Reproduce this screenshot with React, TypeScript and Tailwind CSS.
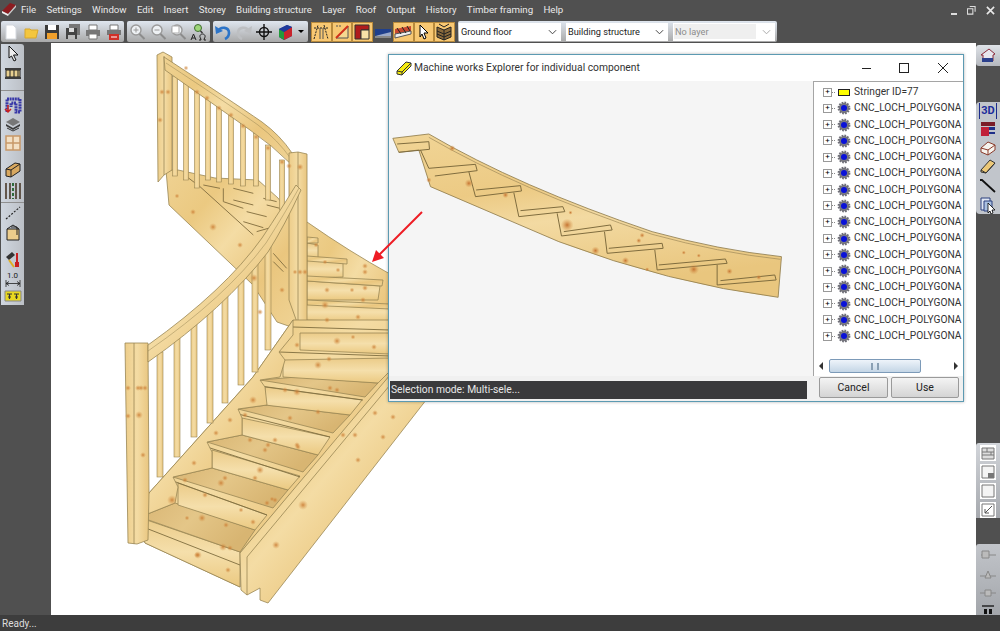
import type { ReactNode } from "react";

const font = "font-['Roboto','Liberation_Sans',Arial,sans-serif]";
const menus = ["File", "Settings", "Window", "Edit", "Insert", "Storey", "Building structure", "Layer", "Roof", "Output", "History", "Timber framing", "Help"];

const LINE = "#998654";

function Ico({ children, className = "" }: { children: ReactNode; className?: string }) {
  return (
    <svg viewBox="0 0 18 18" className={`h-[18px] w-[18px] shrink-0 ${className}`}>
      {children}
    </svg>
  );
}

function Btn({ children, on }: { children: ReactNode; on?: boolean }) {
  return (
    <div className={`flex h-5 w-[20.5px] shrink-0 items-center justify-center ${on ? "border border-[#b88a3c] bg-[#f8c873]" : ""}`}>
      {children}
    </div>
  );
}

function Loupe({ mark, dim = true }: { mark?: ReactNode; dim?: boolean }) {
  return (
    <Ico>
      <circle cx="8" cy="7" r="5" fill="#eef1f4" stroke={dim ? "#9a9a9a" : "#4a4a4a"} strokeWidth="1.4" />
      <path d="M11.5 11l5 5" stroke={dim ? "#8c8c8c" : "#3a3a3a"} strokeWidth="2" />
      {mark}
    </Ico>
  );
}

function TopToolbar() {
  return (
    <div className="flex h-[21px] items-center gap-[3px] pl-px">
      <Group className="w-[123px]">
        <Btn><Ico><path d="M4 2h7l3 3v11H4z" fill="#fff" stroke="#d4d8de" /></Ico></Btn>
        <Btn><Ico><path d="M2 6h5l1 1h7l-2 8H2z" fill="#f4c63e" stroke="#d8a72c" /></Ico></Btn>
        <Btn><Ico><path d="M2 2h14v14H2z" fill="#3b3b3b" /><path d="M5 2h8v5H5z" fill="#fff" /><path d="M4 10h10v6H4z" fill="#f0a02c" /></Ico></Btn>
        <Btn><Ico><path d="M5 1h11v11H5z" fill="#777" /><path d="M2 5h11v11H2z" fill="#444" /><path d="M5 5h5v4H5z" fill="#ddd" /><path d="M4 12h7v4H4z" fill="#bbb" /></Ico></Btn>
        <Btn><Ico><path d="M5 2h8v5H5z" fill="#fff" stroke="#777" /><path d="M2 7h14v6H2z" fill="#777" /><path d="M5 11h8v5H5z" fill="#fff" stroke="#777" /></Ico></Btn>
        <Btn><Ico><path d="M5 2h8v5H5z" fill="#fff" stroke="#777" /><path d="M2 7h14v5H2z" fill="#777" /><path d="M4 11h10v6H4z" fill="#d03028" /><path d="M6 14h6" stroke="#fff" /></Ico></Btn>
      </Group>
      <Group className="w-[83px]">
        <Btn><Loupe mark={<path d="M5.5 7h5M8 4.5v5" stroke="#999" />} /></Btn>
        <Btn><Loupe mark={<path d="M5.5 7h5" stroke="#999" />} /></Btn>
        <Btn><Loupe mark={<path d="M3 3h7v7H3z" fill="#fff" stroke="#aaa" />} /></Btn>
        <Btn>
          <Ico>
            <circle cx="8" cy="5" r="3.5" fill="#9ed67a" stroke="#3f6e2f" />
            <path d="M10.5 8l2 2" stroke="#333" strokeWidth="1.5" />
            <path d="M1 17l2.5-6 2.5 6M2 15h3M9 17h2l-.5-2c-1.5-2 0-4 2-4s3.5 2 2 4l-.5 2h2" fill="none" stroke="#222" />
          </Ico>
        </Btn>
      </Group>
      <Group className="w-[95px]">
        <Btn><Ico><path d="M4 8c3-5 11-4 11 2 0 3-2 5-4 6" fill="none" stroke="#2c74c8" strokeWidth="2.6" /><path d="M1 3l1 8 7-3z" fill="#2c74c8" /></Ico></Btn>
        <Btn><Ico><path d="M14 8c-3-5-11-4-11 2 0 3 2 5 4 6" fill="none" stroke="#bdbfc2" strokeWidth="2.6" /><path d="M17 3l-1 8-7-3z" fill="#bdbfc2" /></Ico></Btn>
        <Btn><Ico><circle cx="9" cy="9" r="4.5" fill="none" stroke="#111" strokeWidth="1.4" /><path d="M9 1v16M1 9h16" stroke="#111" strokeWidth="1.4" /></Ico></Btn>
        <Btn><Ico><path d="M3 6l8-4 5 2v9l-8 4-5-3z" fill="#1f3a9c" /><path d="M3 6l5 3v8l-5-3z" fill="#239a3c" /><path d="M8 9l8-5v9l-8 4z" fill="#c8242c" /><path d="M3 6l8-4 5 2-8 5z" fill="#1f3a9c" /></Ico></Btn>
        <div className="ml-[3px] h-0 w-0 border-x-[3px] border-t-[3px] border-x-transparent border-t-black" />
      </Group>
      <div className="flex h-5 w-[144px] items-center">
        <Btn on><Ico><path d="M2 16L6 2M12 2l4 14M2 5h14" stroke="#222" strokeDasharray="2 1" fill="none" /><path d="M8 5v11M11 5v11" stroke="#555" /></Ico></Btn>
        <Btn on><Ico><path d="M3 15L15 3v12z" fill="#f7d890" stroke="#555" /><path d="M3 15L15 3" stroke="#d0301c" strokeWidth="2" /><path d="M3 3h6" stroke="#555" strokeDasharray="2 1" /></Ico></Btn>
        <Btn on><Ico><path d="M2 2h14v5H8v9H2z" fill="#b01c1c" stroke="#333" /><path d="M8 7h8v9H8z" fill="#f7e0a8" stroke="#333" /></Ico></Btn>
        <Btn><Ico><path d="M1 13L17 6v7z" fill="#9aa8c8" /><path d="M1 6h16v3L1 13z" fill="#1f3f8c" /><path d="M1 13h16v2H1z" fill="#888" /></Ico></Btn>
        <Btn on><Ico><path d="M1 6l16-3v5L1 11z" fill="#c84830" /><path d="M1 11l16-3v3L1 15z" fill="#eee" stroke="#555" /><path d="M3 5l4 6M8 4l4 6M13 3l3 5" stroke="#222" /></Ico></Btn>
        <Btn on><Ico><path d="M5 2l8 8H9l2 5-2 1-2-5-2 3z" fill="#fff" stroke="#000" /></Ico></Btn>
        <Btn on><Ico><path d="M2 4l7 3 7-3v10l-7 3-7-3z" fill="#8a6a3c" stroke="#222" /><path d="M9 7v10M2 8l7 3 7-3M2 11l7 3 7-3M4 1l5 3 5-3" stroke="#222" fill="none" /></Ico></Btn>
      </div>
      <Group className="w-[319px] pl-px">
        <Combo label="Ground floor" />
        <Combo label="Building structure" className="ml-[5px]" />
        <Combo label="No layer" className="ml-[5px]" off />
      </Group>
    </div>
  );
}

function Group({ children, className = "" }: { children: ReactNode; className?: string }) {
  return (
    <div className={`flex h-[21px] items-center rounded-[2px] bg-gradient-to-b from-[#dfe6ef] to-[#a9a9a9] ${className}`}>
      {children}
    </div>
  );
}

function Combo({ label, className = "", off }: { label: string; className?: string; off?: boolean }) {
  return (
    <div className={`flex h-[18px] w-[102px] items-center bg-white pl-px pr-1 text-[9.2px] ${off ? "text-[#8c8c8c]" : "text-[#222]"} ${className}`}>
      <span className={`flex h-[15px] flex-1 items-center whitespace-nowrap pl-px ${off ? "bg-[#efefef]" : ""}`}>{label}</span>
      <svg viewBox="0 0 10 6" className="ml-1.5 h-[6px] w-[9px] shrink-0">
        <path d="M1 1l4 4 4-4" fill="none" stroke={off ? "#aaa" : "#444"} strokeWidth="1.1" />
      </svg>
    </div>
  );
}

function LeftToolbar() {
  return (
    <div className="ml-px mt-px flex h-[261px] w-[23px] flex-col items-center rounded-tr-[3px] bg-gradient-to-r from-[#cfd6df] to-[#bcc0c6] pt-[1px]">
      <Ico><path d="M5 1l9 9H9.5l2.5 5-2 1-2.5-5L5 13z" fill="#eee" stroke="#111" /></Ico>
      <Ico className="mt-px"><path d="M2 6h14v7H2z" fill="#e8d090" stroke="#222" /><path d="M1 4h16v2H1zM1 13h16v2H1z" fill="#3c3c3c" /><path d="M6 6v7M10 6v7M14 6v7" stroke="#222" /></Ico>
      <div className="mb-[5px] mt-[8px] h-px w-full bg-[#8f8f8f]" />
      <Ico><path d="M3 16V3h13v13h-4V7H7v4" fill="none" stroke="#3838a8" strokeWidth="3" strokeDasharray="2 .6" /><path d="M4 9v7M1 13l3 3 3-3" fill="none" stroke="#c82020" strokeWidth="1.5" /></Ico>
      <Ico className="mt-px"><path d="M2 7l7-4 7 4-7 4z" fill="#777" /><path d="M2 9l7 4 7-4v2l-7 4-7-4z" fill="#3c3c3c" /><path d="M3 13l6 3 6-3" stroke="#333" fill="none" /></Ico>
      <Ico className="mt-px"><path d="M2 2h14v14H2z" fill="#f3e0c4" stroke="#c89868" strokeWidth="1.5" /><path d="M9 2v14M2 9h14" stroke="#c89868" strokeWidth="1.5" /></Ico>
      <Ico className="mt-[9px]"><path d="M2 8l9-6 5 1v7l-9 6-5-1z" fill="#d8a860" stroke="#222" /><path d="M2 8l5 1v7M7 9l9-6" fill="none" stroke="#222" /></Ico>
      <Ico className="mt-[3px]"><path d="M2 1v16M6 1v16M12 1v16M16 1v16" stroke="#4a3a2a" strokeWidth="1.6" /><path d="M9 1v16" stroke="#2f6a3a" strokeWidth="2" strokeDasharray="3 2" /></Ico>
      <div className="mt-[2px] h-px w-full bg-[#8f8f8f]" />
      <Ico className="mt-[1px]"><path d="M2 15L16 3" stroke="#222" strokeWidth="1.2" strokeDasharray="2 1.5" /></Ico>
      <Ico className="mt-[1px]"><path d="M3 6h12v11H3z" fill="#eccd8c" stroke="#222" /><path d="M3 6l6-4 6 4M7 4h6v8" fill="none" stroke="#222" /></Ico>
      <Ico className="mt-[9px]"><path d="M2 7l6-5 3 3-6 5z" fill="#333" /><path d="M5 10l5 7" stroke="#e0b020" strokeWidth="2" /><path d="M13 3v9" stroke="#c82020" strokeWidth="2" /><path d="M11 12h4v5h-4z" fill="#c82020" /></Ico>
      <div className="mt-[3px] flex h-[17px] w-full flex-col items-center text-[8px] leading-[9px] text-[#222]">
        1.0
        <svg viewBox="0 0 18 7" className="h-[7px] w-[18px]"><path d="M2 0v7M16 0v7M2 3.5h14M2 3.5l3-2M2 3.5l3 2M16 3.5l-3-2M16 3.5l-3 2" stroke="#222" fill="none" strokeWidth=".8" /></svg>
      </div>
      <Ico><path d="M1 4h16v10H1z" fill="#e8d820" stroke="#888" /><path d="M3 7h5M4 10h3M5.5 7v5M10 7h5M11 10h3M12.5 7v5" stroke="#333" strokeWidth="1.2" /></Ico>
    </div>
  );
}

function RightDock() {
  return (
    <div className="flex w-6 flex-col items-center">
      <div className="mt-0.5 flex h-[21px] w-full items-center justify-center rounded-l-[3px] bg-gradient-to-b from-[#dfe3e8] to-[#b5b8be]">
        <Ico><path d="M2 9l8-6 6 5-2 1v6H4V9z" fill="#e6e6ee" stroke="#8a2a3a" /><path d="M3 12h11v4H3z" fill="#2a3f8c" /></Ico>
      </div>
      <div className="mt-[36px] flex h-[112px] w-full flex-col items-center gap-[1px] rounded-l-[4px] bg-[#c1c5cb] pt-[1px]">
        <div className="flex h-[18px] w-[18px] items-center justify-center border-x border-[#1c2c8c] text-[11px] font-bold leading-none text-[#1c2c9c]">3D</div>
        <Ico><path d="M2 2h14v4H2z" fill="#7a1c28" /><path d="M2 7h8v9H2z" fill="#c02038" /><path d="M10 7h6v3h-6zM10 12h6v2h-6z" fill="#1f2f88" /></Ico>
        <Ico><path d="M2 9l7-6 7 3v5l-7 5-7-3z" fill="#f6f4ee" stroke="#8a3a2a" /><path d="M2 9l7 2v5M9 11l7-5" stroke="#8a3a2a" fill="none" /></Ico>
        <Ico><path d="M2 12L11 2l5 3-9 10-5-1z" fill="#ecc878" stroke="#333" /><path d="M2 12l5 3M7 15l9-10" stroke="#333" fill="none" /></Ico>
        <Ico><path d="M1 3l2 0 13 12" stroke="#111" strokeWidth="1.8" fill="none" /></Ico>
        <Ico><path d="M2 2h9v12H2z" fill="#dfe6f3" stroke="#2a3f7c" /><path d="M5 5h8v10H5z" fill="#aac0e0" stroke="#2a3f7c" /><path d="M9 7l7 7h-3l1 3-2 1-1-3-2 2z" fill="#fff" stroke="#000" strokeWidth=".8" /></Ico>
      </div>
      <div className="mt-[229px] flex h-[75px] w-full flex-col items-center gap-[1px] rounded-tl-[3px] bg-gradient-to-b from-[#d2d5da] to-[#a6a9ae] pt-[1px]">
        <Ico><path d="M1 1h16v16H1z" fill="#fff" /><path d="M3 4h12v11H3z" fill="#ddd" stroke="#777" /><path d="M3 8h12M3 11h12M8 4v4M12 8v3" stroke="#777" /></Ico>
        <Ico><path d="M1 1h16v16H1z" fill="#fff" /><path d="M3 3h12v12H3z" fill="#f4f4f4" stroke="#777" /><path d="M9 10h6v5H9z" fill="#777" /></Ico>
        <Ico><path d="M1 1h16v16H1z" fill="#fff" /><path d="M3 3h12v12H3z" fill="#f4f4f4" stroke="#777" /></Ico>
        <Ico><path d="M1 1h16v16H1z" fill="#fff" /><path d="M3 3h12v12H3z" fill="#fff" stroke="#777" /><path d="M13 5l-7 7M6 8v4h4" fill="none" stroke="#555" /></Ico>
      </div>
      <div className="mt-[26px] flex h-[72px] w-full flex-col items-center rounded-tl-[3px] bg-gradient-to-b from-[#c2c5ca] to-[#a3a6ab] pt-0.5">
        <Ico><path d="M2 9h15" stroke="#888" /><path d="M3 5h7v7H3z" fill="#bbb" stroke="#888" /></Ico>
        <Ico className="mt-px"><path d="M1 11h16" stroke="#888" /><path d="M6 13l3-7 3 7z" fill="#bbb" stroke="#888" /></Ico>
        <Ico className="mt-px"><path d="M1 9h16" stroke="#888" /><path d="M6 6h6v6H6z" fill="#bbb" stroke="#888" /></Ico>
        <svg viewBox="0 0 14 10" className="mt-[3px] h-[10px] w-[14px]"><path d="M1 1h12" stroke="#111" strokeWidth="1.3" /><path d="M3 4h3v5H3zM8 4h3v5H8z" fill="#111" /></svg>
      </div>
    </div>
  );
}

function Wood({ d, fill = "url(#wood)" }: { d: string; fill?: string }) {
  return <path d={d} fill={fill} stroke={LINE} strokeWidth="0.8" strokeLinejoin="round" />;
}

const knots: [number, number, number][] = [
  [162, 92, 2], [168, 92, 2], [160, 120, 2], [186, 68, 1.5], [197, 92, 2], [207, 98, 2], [219, 108, 2], [231, 115, 2], [243, 126, 2], [256, 137, 2], [268, 148, 2], [282, 162, 2],
  [213, 227, 3], [193, 212, 2], [177, 196, 1.5], [240, 245, 2], [254, 278, 3], [282, 290, 2], [260, 312, 2], [289, 166, 2], [300, 167, 2.5], [300, 272, 2], [295, 272, 1.5], [305, 272, 2],
  [338, 270, 1.5], [365, 272, 2], [365, 266, 2], [327, 290, 2], [365, 288, 2], [363, 300, 2], [327, 320, 2], [358, 317, 2], [325, 305, 3], [337, 341, 3], [374, 347, 2], [318, 365, 3],
  [353, 337, 1.5], [297, 345, 2], [138, 388, 2], [139, 415, 3], [128, 416, 2], [141, 388, 2], [128, 388, 2], [145, 388, 2], [143, 455, 2], [172, 500, 4], [194, 463, 2], [216, 433, 2],
  [230, 420, 2], [202, 518, 3], [187, 518, 1.5], [226, 525, 2], [230, 548, 2], [197, 555, 2], [198, 555, 3], [228, 570, 2], [223, 547, 3], [275, 500, 2], [255, 478, 2], [241, 510, 1.5],
  [221, 483, 3], [225, 478, 2], [253, 522, 2], [267, 503, 2], [303, 505, 4], [297, 445, 2], [343, 435, 2], [355, 435, 2], [358, 460, 2], [375, 413, 2], [383, 437, 2], [393, 417, 2],
  [276, 545, 3], [272, 499, 1.5], [268, 445, 2], [297, 392, 3], [253, 400, 3], [285, 390, 2], [318, 412, 2], [298, 447, 2], [330, 388, 2], [329, 359, 2], [337, 390, 2], [260, 470, 3],
  [265, 450, 2], [290, 418, 2], [245, 415, 2], [205, 495, 2], [185, 480, 2], [250, 440, 2], [275, 440, 2], [325, 262, 1.5], [352, 290, 1.5], [316, 245, 1.5],
];

const lowerSteps: { tread?: string; nose: string; face: string }[] = [
  { tread: "M140 517L175 503L255 530L240 552Z", nose: "M138 525L240 565", face: "M138 517L138 525L145 543L240 587L240 552Z" },
  { tread: "M173 477L212 468L288 490L273 508Z", nose: "M173 481L267 515", face: "M178 483L178 505L255 530L267 515Z" },
  { tread: "M207 442L242 435L318 455L303 472Z", nose: "M207 447L300 477", face: "M212 450L212 468L288 490L300 476Z" },
  { tread: "M238 409L267 405L350 415L333 433Z", nose: "M238 414L330 437", face: "M242 418L242 435L318 455L330 437Z" },
  { tread: "M260 380L297 377L378 383L365 397Z", nose: "M260 386L363 400", face: "M265 387L265 405L350 415L362 400Z" },
  { nose: "M279 352L390 356", face: "M283 360L283 377L378 383L390 371L390 358Z" },
  { nose: "M293 327L390 330", face: "M300 333L300 350L390 354L390 333Z" },
];

const upperSteps = [
  "M300 302L390 307L390 322L300 320Z",
  "M307 281L380 286L378 300L307 300Z",
  "M307 260L343 263L343 277L307 278Z",
  "M307 243L318 245L318 258L307 258Z",
];

const upperNoses = ["M307 237L318 238L318 243L307 243Z", "M307 256L347 259L347 264L307 261Z", "M307 276L383 280L382 286L307 281Z", "M307 300L390 304L390 309L307 305Z"];

const upperBars = [[175, 76], [186, 83], [197, 91], [208, 99], [219, 106], [231, 113], [243, 123], [256, 133], [268, 145], [282, 160]];
const upperBarBottom = [176, 180, 188, 180, 182, 184, 186, 186, 200, 210];
const lowerBars = [[160, 352, 477], [177, 337, 457], [194, 320, 437], [210, 304, 423], [225, 285, 403], [241, 268, 385], [255, 258, 372], [268, 246, 350]];

function Stair() {
  return (
    <svg viewBox="51 43 925 572" className="h-full w-full">
      <defs>
        <linearGradient id="wood" x1="0" y1="0" x2="1" y2="1">
          <stop offset="0" stopColor="#efd292" />
          <stop offset="0.25" stopColor="#ebc981" />
          <stop offset="0.45" stopColor="#f4dca4" />
          <stop offset="0.7" stopColor="#eac67e" />
          <stop offset="1" stopColor="#f0d496" />
        </linearGradient>
        <linearGradient id="post" x1="0" y1="0" x2="1" y2="0">
          <stop offset="0" stopColor="#edcd8a" />
          <stop offset="0.5" stopColor="#f4dca4" />
          <stop offset="1" stopColor="#e9c680" />
        </linearGradient>
        <linearGradient id="face" x1="0" y1="0" x2="0" y2="1">
          <stop offset="0" stopColor="#ebcb88" />
          <stop offset="0.5" stopColor="#f5dfab" />
          <stop offset="1" stopColor="#ebc981" />
        </linearGradient>
        <linearGradient id="tread" x1="0" y1="0" x2="1" y2="0.4">
          <stop offset="0" stopColor="#d9b674" />
          <stop offset="0.5" stopColor="#e4c688" />
          <stop offset="1" stopColor="#d8b572" />
        </linearGradient>
        <radialGradient id="knot">
          <stop offset="0" stopColor="#c9782f" stopOpacity=".85" />
          <stop offset="1" stopColor="#d89a50" stopOpacity="0" />
        </radialGradient>
      </defs>

      <Wood d="M307 222Q350 252 390 274L390 402L300 402L300 222Z" />
      {upperSteps.map((d, i) => <Wood key={i} d={d} fill="url(#face)" />)}
      {upperNoses.map((d) => <Wood key={d} d={d} />)}

      <Wood d="M166 170L178 170L215 178L258 180L278 198L296 222L300 330L277 322L253 285L230 263L169 205Z" />
      <g transform="translate(120 45) scale(.3333)" stroke="#8c7646" strokeWidth="3" fill="none">
        <path d="M250 420L300 430M310 430V470L370 490M340 430L400 445M340 465L400 480M380 500L440 515M370 530L430 548M440 480L480 490M430 460L470 470M410 560L480 540M460 625L500 670M460 650L490 680M200 395L240 425L400 570" />
      </g>

      {upperBars.map(([x, y], i) => (
        <rect key={x} x={x - 2.5} y={y} width="5" height={upperBarBottom[i] - y} fill="url(#post)" stroke={LINE} strokeWidth=".6" />
      ))}
      <Wood d="M157 55L163 52L172 57L172 170L164 175L158 182Z" fill="url(#post)" />
      <path d="M164 56V175" stroke={LINE} strokeWidth=".8" />
      <Wood d="M164 57Q230 100 262 122Q280 135 292 153L292 165Q272 145 250 130L165 70Z" />
      <path d="M166 63Q230 105 258 125Q278 140 291 159" stroke={LINE} strokeWidth=".5" fill="none" />

      <Wood d="M289 153L298 152L307 154L307 325L298 325L289 300Z" fill="url(#post)" />
      <path d="M298 152V325" stroke={LINE} strokeWidth=".8" />

      <Wood d="M140 517L149 493L253 377L293 320L390 320L390 377L240 553L240 587L145 543Z" />
      {lowerSteps.map((s, i) => (
        <g key={i}>
          <Wood d={s.face} fill="url(#face)" />
          {s.tread && <Wood d={s.tread} fill="url(#tread)" />}
          <path d={s.nose} stroke="#7f6d3e" strokeWidth=".9" />
        </g>
      ))}
      <Wood d="M149 493L253 377L293 320L293 335L279 352L285 360L280 377L260 380L265 387L267 405L238 409L242 418L242 435L207 442L212 452L212 468L173 477L178 487L175 503L140 517Z" />
      <Wood d="M240 553L390 375L430 395L268 603L260 600L260 588L247 595L241 590Z" />
      <path d="M247 557L390 385M247 557V595" stroke={LINE} strokeWidth=".8" fill="none" />

      {lowerBars.map(([x, y, b]) => (
        <rect key={x} x={x - 3} y={y} width="6" height={b - y} fill="url(#post)" stroke={LINE} strokeWidth=".6" />
      ))}
      <Wood d="M125 343L148 343L149 493L148 540L137 544L128 543Z" fill="url(#post)" />
      <path d="M134 343V544" stroke={LINE} strokeWidth=".8" />
      <Wood d="M148 345Q225 290 262 238Q282 208 296 185L301 190Q285 225 268 252Q225 308 148 362Z" />
      <path d="M148 351Q226 297 266 243Q285 213 299 188" stroke={LINE} strokeWidth=".5" fill="none" />

      {knots.map(([x, y, r], i) => (
        <circle key={i} cx={x} cy={y} r={r + 1} fill="url(#knot)" />
      ))}
    </svg>
  );
}

const stringerNotches = [
  "M35 282L130 275L132 298L40 307",
  "M105 300L130 355L270 343L275 362L148 378",
  "M250 365L270 440L408 423L405 407L272 420",
  "M385 428L400 500L538 485L532 470L405 482",
  "M515 490L528 558L680 540L675 525L535 545",
  "M657 545L665 610L833 595L830 580L670 595",
  "M808 600L815 660L1025 640L1020 627L820 645",
  "M995 645L995 705L1172 690L1168 675L1005 692",
];

const stringerKnots = [
  [200, 295, 6], [250, 400, 8], [360, 435, 6], [545, 525, 12], [555, 488, 4], [630, 602, 8], [770, 556, 5], [760, 572, 5], [720, 632, 7], [925, 658, 10], [1032, 664, 6], [785, 658, 4], [895, 608, 4], [940, 617, 4], [130, 390, 5], [1120, 682, 5],
];

function StringerPreview() {
  return (
    <svg viewBox="389 81 423 295" className="h-full w-full">
      <defs>
        <linearGradient id="sw" x1="0" y1="0" x2="0.3" y2="1">
          <stop offset="0" stopColor="#f1d596" />
          <stop offset="0.4" stopColor="#ecca84" />
          <stop offset="0.6" stopColor="#f3daa2" />
          <stop offset="1" stopColor="#e9c67e" />
        </linearGradient>
        <radialGradient id="sk">
          <stop offset="0" stopColor="#c67432" />
          <stop offset="1" stopColor="#d89a50" stopOpacity="0" />
        </radialGradient>
      </defs>
      <g transform="translate(385 50) scale(.3333)">
        <path
          d="M22 265L130 252Q400 410 800 545Q1000 600 1188 620L1178 742Q850 700 520 575L135 410L100 300L40 307Z"
          fill="url(#sw)"
          stroke="#8f7c4c"
          strokeWidth="2.5"
          strokeLinejoin="round"
        />
        <path d="M130 262Q400 418 800 553Q1000 608 1185 628" fill="none" stroke="#9c8756" strokeWidth="2" />
        {stringerNotches.map((d) => (
          <path key={d} d={d} fill="none" stroke="#7f6c3e" strokeWidth="3" />
        ))}
        {stringerKnots.map(([x, y, r]) => (
          <circle key={x} cx={x} cy={y} r={r * 1.6} fill="url(#sk)" />
        ))}
      </g>
    </svg>
  );
}

function TreeRow({ first, label }: { first?: boolean; label: string }) {
  return (
    <div className="flex h-[16.27px] items-center whitespace-nowrap pl-[9px] text-[10.2px] leading-none text-[#333]">
      <span className="flex h-[9px] w-[9px] shrink-0 items-center justify-center border border-[#999] bg-white text-[8px] leading-none text-black">+</span>
      <span className="w-[3px] shrink-0 border-t border-dotted border-[#888]" />
      {first ? (
        <span className="ml-[3px] mr-[4px] h-[7px] w-3 shrink-0 border border-[#222] bg-[#ffff00]" />
      ) : (
        <svg viewBox="0 0 14 14" className="ml-[2px] mr-[3px] h-[14px] w-[14px] shrink-0">
          <circle cx="7" cy="7" r="5.2" fill="#7c7c84" stroke="#6f6f78" strokeWidth="2.4" strokeDasharray="1.6 1.1" />
          <circle cx="7" cy="7" r="3" fill="#0a12d8" />
        </svg>
      )}
      <span>{label}</span>
    </div>
  );
}

function Dialog() {
  return (
    <div className="absolute left-[337px] top-[11px] flex h-[348px] w-[576px] flex-col border border-[#5c9ab2] bg-[#f0f0f0] shadow-[0_0_3px_rgba(0,0,0,.3)]">
      <div className="flex h-[26px] shrink-0 items-center bg-white pl-[7px] text-[10.3px] text-[#333]">
        <svg viewBox="0 0 16 16" className="mr-[2px] h-4 w-4">
          <path d="M1 11L10 2l5 1v3l-9 9-5-1z" fill="#f6ec10" stroke="#333" />
          <path d="M1 11l5 1 9-9M6 12v3" fill="none" stroke="#333" />
        </svg>
        Machine works Explorer for individual component
        <div className="ml-auto flex items-center text-[#222]">
          <span className="mr-[28px] h-px w-[9px] bg-[#222]" />
          <span className="mr-[29px] h-[10px] w-[10px] border border-[#222]" />
          <svg viewBox="0 0 10 10" className="mr-[15px] h-[10px] w-[10px]"><path d="M0 0l10 10M10 0L0 10" stroke="#222" /></svg>
        </div>
      </div>
      <div className="flex h-[295px] shrink-0">
        <div className="w-[424px] bg-[#f5f5f5]"><StringerPreview /></div>
        <div className="flex w-[150px] flex-col overflow-hidden border-l border-t border-[#a5a5a5] bg-white pt-px">
          <div className="flex-1 overflow-hidden pt-px">
            <TreeRow first label="Stringer ID=77" />
            {Array.from({ length: 15 }).map((_, i) => (
              <TreeRow key={i} label="CNC_LOCH_POLYGONA" />
            ))}
          </div>
          <div className="mb-[3px] flex h-3.5 items-center px-[5px]">
            <span className="h-0 w-0 border-y-[4px] border-r-[4px] border-y-transparent border-r-[#333]" />
            <div className="ml-1.5 flex h-3.5 w-[92px] items-center justify-center rounded-[2px] border border-[#7c9ab8] bg-gradient-to-b from-[#eef4fa] to-[#c4d6e6]">
              <span className="h-[7px] w-[8px] border-x-2 border-double border-[#8aa0b4]" />
            </div>
            <span className="ml-auto h-0 w-0 border-y-[4px] border-l-[4px] border-y-transparent border-l-[#333]" />
          </div>
        </div>
      </div>
      <div className="flex flex-1 items-center pl-px">
        <div className="mt-[3px] flex h-[18px] w-[417px] items-center bg-[#3a3a3c] pl-px text-[10.3px] text-[#e8e8e8]">Selection mode: Multi-sele...</div>
        <button className="mb-[2px] ml-[12px] h-[21px] w-[69px] rounded-[2px] border border-[#9a9a9a] bg-gradient-to-b from-[#f4f4f4] to-[#d4d4d4] text-[10.5px] text-[#222]">Cancel</button>
        <button className="mb-[2px] ml-[3px] h-[21px] w-[68px] rounded-[2px] border border-[#9a9a9a] bg-gradient-to-b from-[#f4f4f4] to-[#d4d4d4] text-[10.5px] text-[#222]">Use</button>
      </div>
    </div>
  );
}

export default function App() {
  return (
    <div className={`relative flex h-[631px] w-[1000px] flex-col overflow-hidden bg-[#505050] ${font}`}>
      <div className="flex h-[21px] items-center pl-[21px] text-[9.7px] text-[#e9e9e9]">
        {menus.map((m) => (
          <span key={m} className="mr-[10.25px]">{m}</span>
        ))}
        <div className="absolute left-[1px] top-[1px]">
          <svg viewBox="0 0 16 16" className="h-4 w-4">
            <path d="M1 10L9 2l6 2-8 9z" fill="#8c1c20" />
            <path d="M1 10l6 3v2l-6-3z" fill="#eee" />
            <path d="M7 13l8-9v2l-8 9z" fill="#ccc" />
          </svg>
        </div>
        <div className="ml-auto mr-[5px] flex items-center gap-[10px] text-[#ddd]">
          <span className="mt-1.5 h-[2px] w-[6px] bg-[#ddd]" />
          <svg viewBox="0 0 10 10" className="h-[9px] w-[9px]"><path d="M3 .5h6v6M.5 3h6v6h-6z" fill="none" stroke="#ddd" strokeWidth="1.2" /></svg>
          <svg viewBox="0 0 10 10" className="h-[9px] w-[9px]"><path d="M1 1l8 8M9 1l-8 8" stroke="#e8e8e8" strokeWidth="1.8" /></svg>
        </div>
      </div>
      <TopToolbar />
      <div className="mt-px flex min-h-0 flex-1">
        <div className="w-[51px] shrink-0"><LeftToolbar /></div>
        <div className="relative min-w-0 flex-1 bg-white">
          <Stair />
          <Dialog />
          <svg viewBox="0 0 52 52" className="absolute left-[320px] top-[168px] h-[52px] w-[52px]">
            <path d="M51 1L6 46" stroke="#ee1c24" strokeWidth="2" />
            <path d="M1 51l4-12 8 8z" fill="#ee1c24" />
          </svg>
        </div>
        <RightDock />
      </div>
      <div className="flex h-4 shrink-0 items-center bg-[#3d3d3d] pl-0.5 text-[10px] text-[#ddd]">Ready...</div>
    </div>
  );
}
